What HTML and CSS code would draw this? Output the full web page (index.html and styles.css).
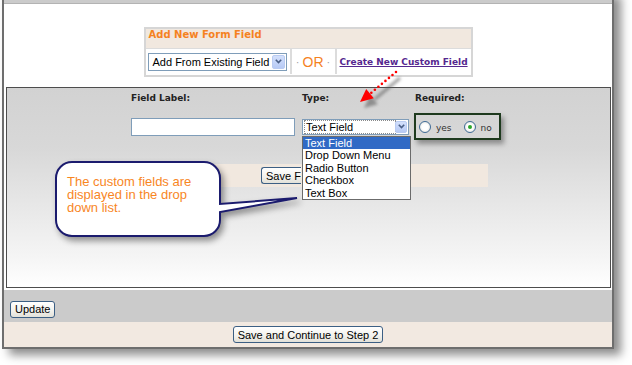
FILE: index.html
```html
<!DOCTYPE html>
<html>
    <head>
        <meta charset="utf-8">
        <title>Add New Form Field</title>
        <link rel="stylesheet" href="styles.css">
    </head>
    <body>
        <div class="frame">
            <div class="topbar"></div>

            <div class="addarea">
                <div class="addbox">
                    <div class="addhead">Add New Form Field</div>
                    <div class="addrow">
                        <div class="addcell cell-select">
                            <div class="combo combo-existing">
                                <span class="combo-text">Add From Existing Field</span>
                                <span class="combo-btn"><svg width="7" height="5" viewBox="0 0 7 5"><polyline points="0.8,0.8 3.5,3.6 6.2,0.8" fill="none" stroke="#4a5f86" stroke-width="1.6"/></svg></span>
                            </div>
                        </div>
                        <div class="addcell cell-or"><span class="dot">&middot;</span> OR <span class="dot">&middot;</span></div>
                        <div class="addcell cell-link"><a class="newlink" href="#">Create New Custom Field</a></div>
                    </div>
                </div>
            </div>

            <div class="panel">
                <div class="fields">
                    <div class="lbl">Field Label:</div>
                    <div class="lbl">Type:</div>
                    <div class="lbl">Required:</div>

                    <div><input class="txt" type="text"></div>
                    <div class="typewrap">
                        <div class="combo combo-type">
                            <span class="combo-text"><span class="focus">Text Field</span></span>
                            <span class="combo-btn"><svg width="7" height="5" viewBox="0 0 7 5"><polyline points="0.8,0.8 3.5,3.6 6.2,0.8" fill="none" stroke="#4a5f86" stroke-width="1.6"/></svg></span>
                        </div>
                        <ul class="droplist">
                            <li class="sel">Text Field</li>
                            <li>Drop Down Menu</li>
                            <li>Radio Button</li>
                            <li>Checkbox</li>
                            <li>Text Box</li>
                        </ul>
                    </div>
                    <div class="reqbox">
                        <span class="radio"></span><span class="rtext">yes</span>
                        <span class="radio checked"></span><span class="rtext">no</span>
                    </div>
                </div>
                <div class="savefield"><button class="btn btn-field">Save Field</button></div>
            </div>

            <div class="updatebar"><button class="btn">Update</button></div>
            <div class="savebar"><button class="btn">Save and Continue to Step 2</button></div>

            <!-- annotations drawn over the screenshot -->
            <svg class="arrow" width="64" height="50" viewBox="0 0 64 50">
                <defs>
                    <filter id="soft"><feGaussianBlur stdDeviation="1.6"/></filter>
                </defs>
                <g transform="translate(4,6)" opacity="0.55" filter="url(#soft)">
                    <line x1="50" y1="6" x2="25" y2="27" stroke="#555" stroke-width="3"/>
                    <polygon points="14,36 27.8,32.3 20.2,23.1" fill="#555"/>
                </g>
                <line x1="50" y1="6" x2="25" y2="27" stroke="#f00" stroke-width="2.6" stroke-linecap="round" stroke-dasharray="0 4.6"/>
                <polygon points="14,36 27.8,32.3 20.2,23.1" fill="#f00"/>
            </svg>

            <svg class="bubble" width="256" height="90" viewBox="0 0 256 90">
                <path d="M22 4 H154 A16 16 0 0 1 170 20 V46 L247 40 L170 54 V62 A16 16 0 0 1 154 78 H22 A16 16 0 0 1 6 62 V20 A16 16 0 0 1 22 4 Z" fill="#fff" stroke="#1b1b6e" stroke-width="2"/>
            </svg>
            <p class="bubble-text">The custom fields are displayed in the drop down list.</p>
        </div>
    </body>
</html>
```

FILE: styles.css
```css
*{
    margin:            0;
    padding:           0;
    box-sizing:        border-box;
}
body{
    width:             632px;
    height:            365px;
    overflow:          hidden;
    background:        #fff;
    font-family:       "Liberation Sans", Arial, sans-serif;
}
.frame{
    position:          relative;
    width:             612px;
    margin:            -10px 0 0 2px;
    border:            2px solid #6e6e6e;
    border-top:        0;
    background:        #fff;
    box-shadow:        7px 6px 9px rgba(0,0,0,0.45);
}
.topbar{
    height:            14px;
    background:        #cbcbcb;
    border-bottom:     1px solid #b3b3b3;
}

/* add new field box */
.addarea{
    height:            83px;
    padding-top:       23px;
    display:           flex;
    justify-content:   center;
}
.addbox{
    width:             329px;
    height:            50px;
    border:            2px solid #d6d6d6;
}
.addhead{
    height:            20px;
    line-height:       20px;
    padding-left:      3px;
    background:        #f1e8df;
    color:             #f5821f;
    font:              bold 10px "DejaVu Sans", Verdana, sans-serif;
    border-bottom:     1px solid #dcdcdc;
}
.addrow{
    display:           flex;
    height:            25px;
}
.addcell{
    display:           flex;
    align-items:       center;
}
.cell-select{
    width:             144px;
    padding-left:      2px;
}
.cell-or{
    width:             45px;
    border-left:       2px solid #dcdcdc;
    justify-content:   center;
    gap:               3px;
    color:             #f5821f;
    font-size:         14px;
}
.cell-or .dot{
    color:             #a0a0a0;
    font-size:         11px;
}
.cell-link{
    flex:              1;
    border-left:       2px solid #dcdcdc;
    padding-left:      3px;
}
.newlink{
    color:             #55278f;
    font:              bold 9px "DejaVu Sans", Verdana, sans-serif;
}

/* combo boxes */
.combo{
    display:           flex;
    align-items:       center;
    height:            18px;
    border:            1px solid #7f9db9;
    background:        #fff;
    font-size:         11px;
}
.combo-existing{
    width:             139px;
}
.combo-text{
    flex:              1;
    padding-left:      4px;
    white-space:       nowrap;
}
.combo-btn{
    display:           flex;
    align-items:       center;
    justify-content:   center;
    width:             13px;
    height:            14px;
    margin-right:      1px;
    border:            1px solid #b9cbf2;
    border-radius:     2px;
    background:        linear-gradient(#d3e0fc, #b7caf5);
}

/* main panel */
.panel{
    height:            201px;
    margin:            0 1px 2px 2px;
    border:            1px solid #4d4d4d;
    background:        linear-gradient(#d2d2d2, #d8d8d8 30%, #f5f5f5 85%, #fff);
}
.fields{
    display:           grid;
    grid-template-columns: 171px 113px auto;
    row-gap:           9px;
    align-items:       center;
    padding:           5px 0 0 124px;
}
.lbl{
    font:              bold 9px/11px "DejaVu Sans", Verdana, sans-serif;
    color:             #222;
}
.txt{
    display:           block;
    width:             164px;
    height:            18px;
    border:            1px solid #7f9db9;
    background:        #fff;
}
.typewrap{
    position:          relative;
    width:             107px;
}
.combo-type{
    height:            16px;
    padding-left:      1px;
}
.combo-type .combo-text{
    padding-left:      1px;
}
.combo-type .combo-btn{
    height:            12px;
}
.focus{
    display:           block;
    width:             90px;
    padding-left:      1px;
    line-height:       12px;
    outline:           1px dotted #8a8a8a;
}
.droplist{
    position:          absolute;
    top:               17px;
    left:              0;
    width:             109px;
    list-style:        none;
    background:        #fff;
    border:            1px solid #6b6b6b;
    font-size:         11px;
    z-index:           2;
}
.droplist li{
    height:            12.6px;
    line-height:       12.6px;
    padding-left:      2px;
}
.droplist li.sel{
    background:        #316ac5;
    color:             #fff;
}
.reqbox{
    justify-self:      start;
    display:           flex;
    align-items:       center;
    height:            27px;
    margin-left:       -1px;
    padding:           0 7px 0 3px;
    border:            2px solid #1e3a1e;
    box-shadow:        3px 4px 5px rgba(0,0,0,0.35);
}
.radio{
    position:          relative;
    width:             12px;
    height:            12px;
    border:            1px solid #3f6b96;
    border-radius:     50%;
    background:        radial-gradient(#fff 40%, #d8d8d2);
}
.radio.checked::after{
    content:           "";
    position:          absolute;
    left:              3px;
    top:               3px;
    width:             4px;
    height:            4px;
    border-radius:     50%;
    background:        #2aa62a;
}
.rtext{
    margin:            3px 12px 0 5px;
    font:              9px "DejaVu Sans", Verdana, sans-serif;
    color:             #333;
}
.rtext:last-child{
    margin-right:      0;
}
.savefield{
    display:           flex;
    align-items:       center;
    width:             358px;
    height:            23px;
    margin:            24px 0 0 123px;
    padding-left:      131px;
    background:        #f1e8df;
}

/* buttons */
.btn{
    height:            17px;
    padding:           0 4px;
    border:            1px solid #3c5f84;
    border-radius:     3px;
    background:        linear-gradient(#ffffff, #f2f1ec 60%, #e2e1d9);
    font:              11px "Liberation Sans", Arial, sans-serif;
    color:             #000;
}
.btn-field{
    width:             40px;
    border-right:      0;
    border-radius:     3px 0 0 3px;
    text-align:        left;
    white-space:       nowrap;
    overflow:          hidden;
}
.updatebar{
    height:            32px;
    padding:           9px 0 0 6px;
    background:        #cbcbcb;
}
.savebar{
    display:           flex;
    justify-content:   center;
    height:            25px;
    padding-top:       4px;
    background:        #f2e9e1;
}

/* annotations */
.arrow{
    position:          absolute;
    left:              342px;
    top:               76px;
}
.bubble{
    position:          absolute;
    left:              46px;
    top:               168px;
    filter:            drop-shadow(3px 4px 3px rgba(0,0,0,0.4));
}
.bubble-text{
    position:          absolute;
    left:              63px;
    top:               185px;
    width:             146px;
    font-size:         13px;
    line-height:       13px;
    color:             #f8861f;
}
```
